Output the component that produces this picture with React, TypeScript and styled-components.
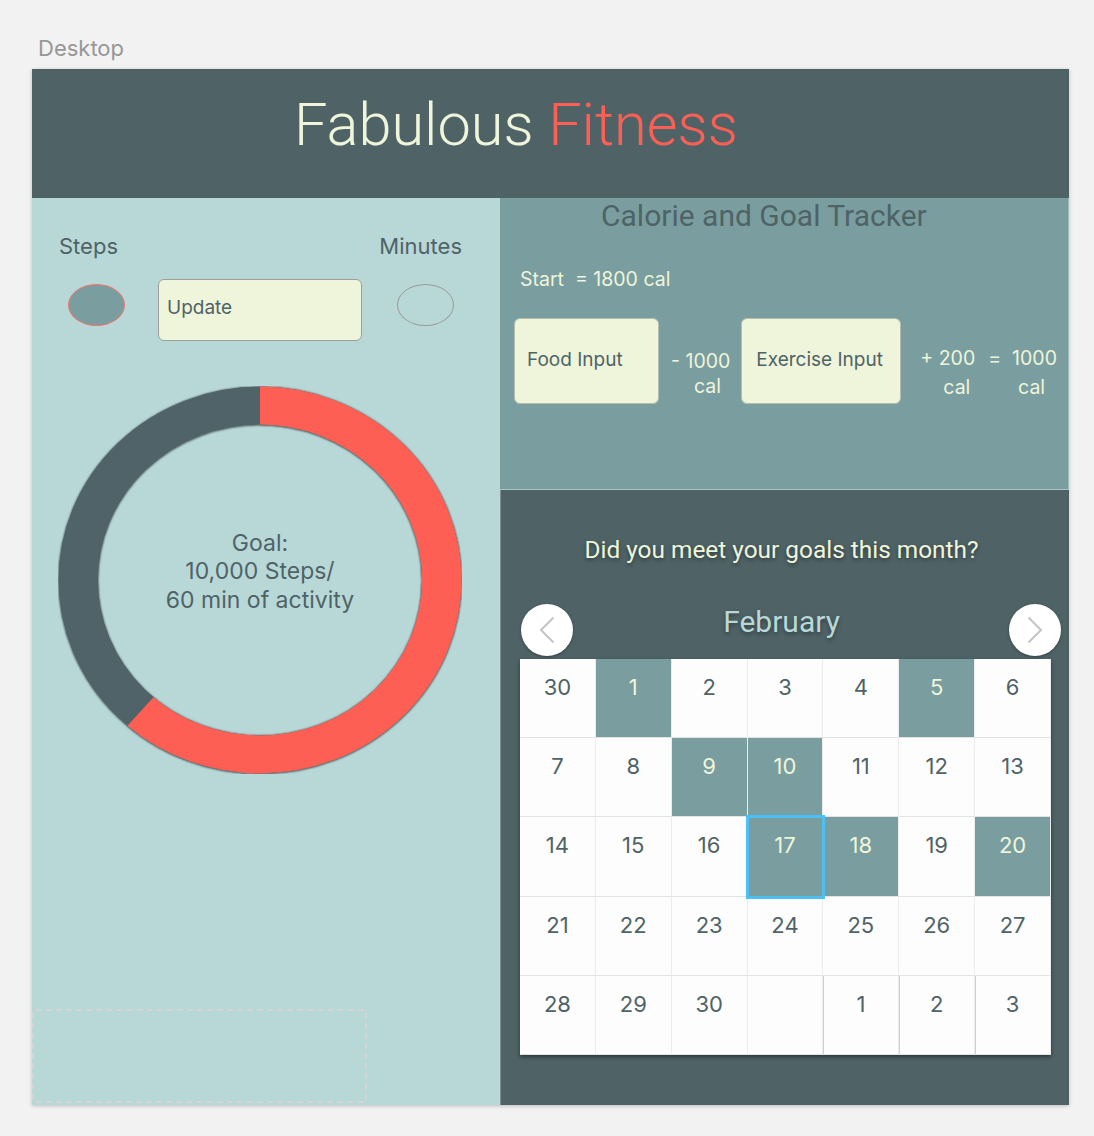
import React from "react";
import styled, { createGlobalStyle } from "styled-components";

const C = {
  dark: "#4f6367",
  teal: "#7a9e9f",
  light: "#b8d8d8",
  cream: "#eef5db",
  red: "#fe5f55",
};

const Global = createGlobalStyle`
  html, body { margin: 0; padding: 0; background: #f2f2f2; }
  body { font-family: Inter, "Noto Sans", sans-serif; }
  * { box-sizing: border-box; }
`;

const Page = styled.div`
  width: 1094px;
  padding: 36px 25px 31px 32px;
`;

const ArtboardLabel = styled.div`
  margin: 0 0 9px 6px;
  font-size: 22px;
  line-height: 24px;
  color: #979797;
`;

const Frame = styled.div`
  width: 1037px;
  height: 1036px;
  display: grid;
  grid-template-rows: 129px 907px;
  box-shadow: 0 1px 4px rgba(0, 0, 0, 0.22);
`;

const Header = styled.header`
  background: ${C.dark};
  padding: 25px 0 0 262px;
  font-family: Roboto, "Liberation Sans", sans-serif;
  font-weight: 300;
  font-size: 59.5px;
  line-height: 62px;
  color: ${C.cream};
  white-space: nowrap;
`;

const Accent = styled.span`
  color: ${C.red};
`;

const Body = styled.div`
  display: grid;
  grid-template-columns: 468px 569px;
  min-height: 0;
`;

/* ---------- left ---------- */

const LeftPanel = styled.section`
  background: ${C.light};
  display: flex;
  flex-direction: column;
  padding-top: 35px;
`;

const LabelRow = styled.div`
  display: flex;
  justify-content: space-between;
  padding: 0 38px 0 27px;
  font-size: 22px;
  line-height: 26px;
  color: ${C.dark};
`;

const ControlRow = styled.div`
  display: flex;
  align-items: flex-start;
  margin-top: 20px;
  padding-left: 36px;
  height: 62px;
`;

const Oval = styled.div<{ $fill: string; $stroke: string; $ml?: number }>`
  width: 57px;
  height: 42px;
  margin-top: 5px;
  border-radius: 50%;
  background: ${(p) => p.$fill};
  border: 1px solid ${(p) => p.$stroke};
  margin-left: ${(p) => p.$ml ?? 0}px;
  flex: none;
`;

const UpdateBox = styled.div`
  width: 204px;
  height: 62px;
  margin-left: 33px;
  background: ${C.cream};
  border: 1px solid #9c9f9a;
  border-radius: 6px;
  display: flex;
  align-items: center;
  padding: 0 0 5px 8px;
  font-size: 19px;
  color: ${C.dark};
`;

const DonutWrap = styled.div`
  position: relative;
  width: 404px;
  height: 388px;
  margin: 45px 0 0 26px;
`;

const GoalText = styled.div`
  position: absolute;
  inset: 0;
  display: flex;
  flex-direction: column;
  align-items: center;
  justify-content: center;
  padding-bottom: 17px;
  font-size: 23px;
  line-height: 28.5px;
  color: ${C.dark};
  text-align: center;
`;

const DashedBox = styled.div`
  margin-top: auto;
  margin-bottom: 2px;
  width: 335px;
  height: 94px;
  border: 2px dashed #d4d6d6;
  border-radius: 4px;
`;

/* ---------- right ---------- */

const RightColumn = styled.div`
  display: grid;
  grid-template-rows: 292px 615px;
`;

const TrackerPanel = styled.section`
  background: ${C.teal};
  border-bottom: 1px solid #a9c5c5;
  border-right: 1px solid #9fbcbc;
`;

const TrackerTitle = styled.h2`
  margin: 0;
  padding-left: 101px;
  font-family: Roboto, "Liberation Sans", sans-serif;
  font-weight: 400;
  font-size: 30px;
  line-height: 36px;
  color: ${C.dark};
`;

const StartLine = styled.div`
  margin-top: 33px;
  padding-left: 20px;
  font-size: 19.5px;
  line-height: 24px;
  color: ${C.cream};
  white-space: pre;
`;

const InputRow = styled.div`
  display: flex;
  align-items: flex-start;
  margin-top: 27px;
  padding-left: 14px;
`;

const InputBox = styled.div<{ $w: number; $pl: number; $ml?: number }>`
  width: ${(p) => p.$w}px;
  height: 86px;
  flex: none;
  margin-left: ${(p) => p.$ml ?? 0}px;
  background: ${C.cream};
  border: 1px solid #b7bcb0;
  border-radius: 6px;
  padding: 29px 0 0 ${(p) => p.$pl}px;
  font-size: 19px;
  line-height: 23px;
  color: ${C.dark};
  white-space: nowrap;
`;

const Figure = styled.div<{ $ml: number; $mt: number; $lh: number }>`
  margin-left: ${(p) => p.$ml}px;
  margin-top: ${(p) => p.$mt}px;
  font-size: 19.5px;
  line-height: ${(p) => p.$lh}px;
  color: ${C.cream};
  white-space: pre;
  flex: none;
`;

const FigureLine = styled.span<{ $indent?: number }>`
  display: block;
  padding-left: ${(p) => p.$indent ?? 0}px;
`;

const CalendarPanel = styled.section`
  background: ${C.dark};
  padding: 46px 18px 0 19px;
  border-left: 1px solid #7f8f91;
`;

const Question = styled.div`
  padding-right: 8px;
  text-align: center;
  font-family: Roboto, "Liberation Sans", sans-serif;
  font-size: 24.4px;
  line-height: 28px;
  color: ${C.cream};
  text-shadow: 0 2px 4px rgba(0, 0, 0, 0.45);
`;

const MonthBar = styled.div`
  display: flex;
  align-items: flex-start;
  height: 54px;
  margin: 39px -10px 0 1px;
`;

const NavButton = styled.button`
  width: 52px;
  height: 52px;
  flex: none;
  margin-top: 1px;
  border: none;
  padding: 0;
  border-radius: 50%;
  background: #ffffff;
  box-shadow: 0 1px 3px rgba(0, 0, 0, 0.35);
  display: grid;
  place-items: center;
`;

const MonthName = styled.div`
  flex: 1;
  margin-top: 1px;
  padding-right: 19px;
  text-align: center;
  font-family: Roboto, "Liberation Sans", sans-serif;
  font-size: 30px;
  line-height: 36px;
  color: ${C.light};
  text-shadow: 0 2px 4px rgba(0, 0, 0, 0.4);
`;

const Calendar = styled.div`
  margin-top: 2px;
  width: 531px;
  height: 396px;
  display: grid;
  grid-template-columns: repeat(7, 1fr);
  grid-template-rows: repeat(5, 1fr);
  background: #fdfdfd;
  box-shadow: 0 2px 4px rgba(0, 0, 0, 0.45);
`;

const Day = styled.div<{ $met?: boolean; $selected?: boolean; $edge?: boolean }>`
  position: relative;
  padding-top: 15px;
  text-align: center;
  font-size: 22px;
  line-height: 26px;
  color: ${(p) => (p.$met ? C.cream : C.dark)};
  background: ${(p) => (p.$met ? C.teal : "transparent")};
  border-right: 1px solid #ececec;
  border-bottom: 1px solid #e3e3e3;
  box-shadow: ${(p) => (p.$edge ? "inset 1px 0 0 #cfcfcf" : "none")};
  outline: ${(p) => (p.$selected ? "3px solid #4cbff5" : "none")};
  outline-offset: -1px;
  z-index: ${(p) => (p.$selected ? 1 : 0)};
`;

/* ---------- pieces ---------- */

const Chevron = ({ dir }: { dir: "left" | "right" }) => (
  <svg width="16" height="28" viewBox="0 0 16 28" aria-hidden="true">
    <polyline
      points={dir === "left" ? "14.5,1.5 2,14 14.5,26.5" : "1.5,1.5 14,14 1.5,26.5"}
      fill="none"
      stroke="#c4c4c4"
      strokeWidth="2"
    />
  </svg>
);

const Donut = () => {
  const r = 181.75;
  const circ = 2 * Math.PI * r;
  const done = 0.614;
  return (
    <svg width="404" height="388" viewBox="0 0 404 388" aria-hidden="true">
      <defs>
        <filter id="ringShadow" x="-10%" y="-10%" width="120%" height="120%">
          <feDropShadow dx="0" dy="0.5" stdDeviation="1.3" floodColor="#000" floodOpacity="0.85" />
        </filter>
      </defs>
      <g transform="translate(202 194) scale(1 0.96)" filter="url(#ringShadow)">
        <circle r={r} fill="none" stroke={C.dark} strokeWidth="39.5" />
        <circle
          r={r}
          fill="none"
          stroke={C.red}
          strokeWidth="39.5"
          strokeDasharray={`${circ * done} ${circ}`}
          transform="rotate(-90)"
        />
      </g>
    </svg>
  );
};

type DayCell = { n: number | ""; met?: boolean; selected?: boolean; edge?: boolean };

const weeks: DayCell[][] = [
  [{ n: 30 }, { n: 1, met: true }, { n: 2 }, { n: 3 }, { n: 4 }, { n: 5, met: true }, { n: 6 }],
  [{ n: 7 }, { n: 8 }, { n: 9, met: true }, { n: 10, met: true }, { n: 11 }, { n: 12 }, { n: 13 }],
  [
    { n: 14 },
    { n: 15 },
    { n: 16 },
    { n: 17, met: true, selected: true },
    { n: 18, met: true },
    { n: 19 },
    { n: 20, met: true },
  ],
  [{ n: 21 }, { n: 22 }, { n: 23 }, { n: 24 }, { n: 25 }, { n: 26 }, { n: 27 }],
  [{ n: 28 }, { n: 29 }, { n: 30 }, { n: "" }, { n: 1, edge: true }, { n: 2, edge: true }, { n: 3, edge: true }],
];

export default function App() {
  return (
    <>
      <Global />
      <Page>
        <ArtboardLabel>Desktop</ArtboardLabel>
        <Frame>
          <Header>
            Fabulous <Accent>Fitness</Accent>
          </Header>
          <Body>
            <LeftPanel>
              <LabelRow>
                <span>Steps</span>
                <span>Minutes</span>
              </LabelRow>
              <ControlRow>
                <Oval $fill={C.teal} $stroke="#f0756c" />
                <UpdateBox>Update</UpdateBox>
                <Oval $fill="transparent" $stroke="#9a9a9a" $ml={35} />
              </ControlRow>
              <DonutWrap>
                <Donut />
                <GoalText>
                  <span>Goal:</span>
                  <span>10,000 Steps/</span>
                  <span>60 min of activity</span>
                </GoalText>
              </DonutWrap>
              <DashedBox />
            </LeftPanel>

            <RightColumn>
              <TrackerPanel>
                <TrackerTitle>Calorie and Goal Tracker</TrackerTitle>
                <StartLine>{"Start  = 1800 cal"}</StartLine>
                <InputRow>
                  <InputBox $w={145} $pl={12}>Food Input</InputBox>
                  <Figure $ml={12} $mt={31} $lh={25}>
                    <FigureLine>- 1000</FigureLine>
                    <FigureLine $indent={23}>cal</FigureLine>
                  </Figure>
                  <InputBox $w={160} $pl={14} $ml={11}>
                    Exercise Input
                  </InputBox>
                  <Figure $ml={19} $mt={26} $lh={29}>
                    <FigureLine>+ 200</FigureLine>
                    <FigureLine $indent={23}>cal</FigureLine>
                  </Figure>
                  <Figure $ml={13} $mt={26} $lh={29}>
                    <FigureLine>=</FigureLine>
                  </Figure>
                  <Figure $ml={11} $mt={26} $lh={29}>
                    <FigureLine>1000</FigureLine>
                    <FigureLine $indent={6}>cal</FigureLine>
                  </Figure>
                </InputRow>
              </TrackerPanel>

              <CalendarPanel>
                <Question>Did you meet your goals this month?</Question>
                <MonthBar>
                  <NavButton aria-label="Previous month">
                    <Chevron dir="left" />
                  </NavButton>
                  <MonthName>February</MonthName>
                  <NavButton aria-label="Next month">
                    <Chevron dir="right" />
                  </NavButton>
                </MonthBar>
                <Calendar>
                  {weeks.map((week, wi) =>
                    week.map((d, di) => (
                      <Day key={`${wi}-${di}`} $met={d.met} $selected={d.selected} $edge={d.edge}>
                        {d.n}
                      </Day>
                    ))
                  )}
                </Calendar>
              </CalendarPanel>
            </RightColumn>
          </Body>
        </Frame>
      </Page>
    </>
  );
}
